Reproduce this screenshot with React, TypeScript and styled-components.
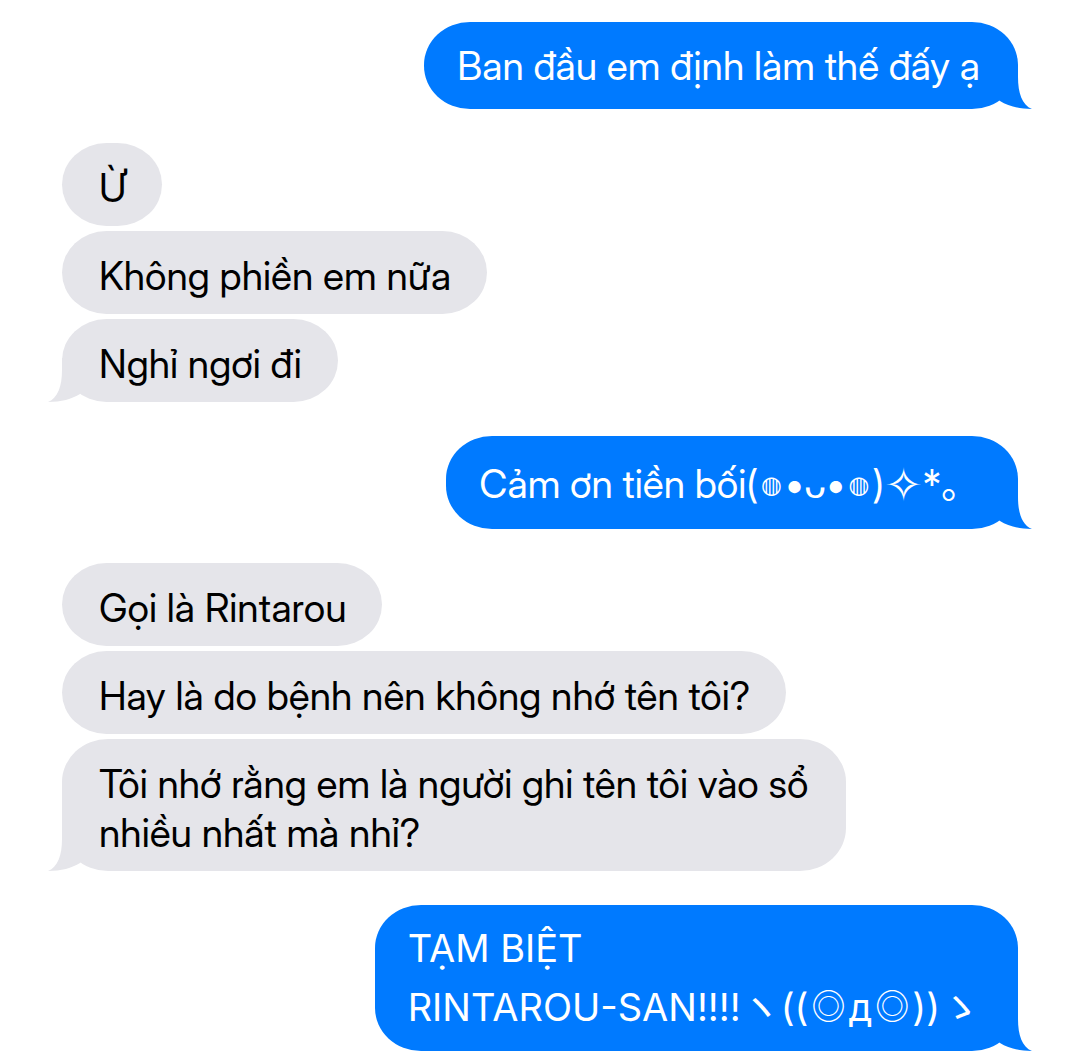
import React from "react";
import styled, { createGlobalStyle } from "styled-components";

const Global = createGlobalStyle`
  body { margin: 0; background: #fff; }
`;

const Thread = styled.main`
  box-sizing: border-box;
  display: flex;
  flex-direction: column;
  gap: 34px;
  padding: 22px 62px 6px;
  font-family: "Inter Display", Inter, "Liberation Sans", "Noto Sans CJK JP", "DejaVu Sans", sans-serif;
  font-size: 39px;
  line-height: 49px;
`;

const Group = styled.section<{ $sent: boolean }>`
  display: flex;
  flex-direction: column;
  align-items: ${p => (p.$sent ? "flex-end" : "flex-start")};
  gap: 5px;
`;

const Bubble = styled.div<{ $sent: boolean; $shout?: boolean }>`
  position: relative;
  box-sizing: border-box;
  max-width: 82%;
  padding: ${p => (p.$sent ? "19px 38px 19px 33px" : "20px 36px 14px 37px")};
  border-radius: 46px / 43px;
  color: ${p => (p.$sent ? "#fff" : "#000")};
  background: ${p => (p.$sent ? "#007aff" : "#e5e5ea")};
  ${p => p.$shout && `
    font-family: Inter, "Liberation Sans", "Noto Sans CJK JP", sans-serif;
    font-size: 38px;
  `}
`;

const Tail = styled.svg<{ $sent: boolean }>`
  position: absolute;
  bottom: 0;
  fill: ${p => (p.$sent ? "#007aff" : "#e5e5ea")};
  ${p => (p.$sent ? "right: -14px;" : "left: -14px; transform: scaleX(-1);")}
`;

type Script = "latin" | "symbols" | "kana";

const Line = styled.p<{ $script: Script }>`
  margin: 0;
  padding: ${p => ({ latin: "0", symbols: "4px 0 2px", kana: "10px 0 0" })[p.$script]};
`;

const Glyph = styled.span`
  line-height: 1;
`;

const Cheek = styled(Glyph)`
  margin: 0 3px;
  font-family: "DejaVu Sans", sans-serif;
  font-size: 24px;
  vertical-align: 5px;
`;

const Sparkle = styled(Glyph)`
  font-family: "DejaVu Sans", sans-serif;
  font-size: 46px;
  vertical-align: -3px;
`;

const Eye = styled(Glyph)`
  margin: 0 3px;
  font-family: "Noto Sans CJK JP", sans-serif;
  font-size: 34px;
  vertical-align: 2px;
`;

const Hand = styled(Glyph)`
  font-family: "Noto Sans CJK JP", sans-serif;
  font-size: 40px;
`;

const glyphs: Record<string, React.ElementType> = {
  "◍": Cheek,
  "✧": Sparkle,
  "◎": Eye,
  "ヽ": Hand,
  "ゝ": Hand,
};

const scriptOf = (text: string): Script =>
  /[ヽゝ]/.test(text) ? "kana" : /[◍✧]/.test(text) ? "symbols" : "latin";

const withGlyphs = (text: string) =>
  text.split(/([◍✧◎ヽゝ])/).map((part, i) => {
    const Shape = glyphs[part];
    return Shape ? <Shape key={i}>{part}</Shape> : part;
  });

type Message = { lines: string[]; shout?: boolean };
type Run = { sent: boolean; messages: Message[] };

const runs: Run[] = [
  { sent: true, messages: [{ lines: ["Ban đầu em định làm thế đấy ạ"] }] },
  {
    sent: false,
    messages: [{ lines: ["Ừ"] }, { lines: ["Không phiền em nữa"] }, { lines: ["Nghỉ ngơi đi"] }],
  },
  { sent: true, messages: [{ lines: ["Cảm ơn tiền bối(◍•ᴗ•◍)✧*。"] }] },
  {
    sent: false,
    messages: [
      { lines: ["Gọi là Rintarou"] },
      { lines: ["Hay là do bệnh nên không nhớ tên tôi?"] },
      { lines: ["Tôi nhớ rằng em là người ghi tên tôi vào sổ nhiều nhất mà nhỉ?"] },
    ],
  },
  { sent: true, messages: [{ lines: ["TẠM BIỆT", "RINTAROU-SAN!!!!ヽ((◎д◎))ゝ"], shout: true }] },
];

export default function App() {
  return (
    <>
      <Global />
      <Thread lang="vi">
        {runs.map((run, i) => (
          <Group key={i} $sent={run.sent}>
            {run.messages.map((message, j) => (
              <Bubble key={j} $sent={run.sent} $shout={message.shout}>
                {j === run.messages.length - 1 && (
                  <Tail $sent={run.sent} width="34" height="44" viewBox="0 0 34 44" aria-hidden="true">
                    <path d="M20 0V12C20 28 24 40 34 44C21 44 10 41 2 36L0 34V0Z" />
                  </Tail>
                )}
                {message.lines.map(line => (
                  <Line key={line} $script={scriptOf(line)}>{withGlyphs(line)}</Line>
                ))}
              </Bubble>
            ))}
          </Group>
        ))}
      </Thread>
    </>
  );
}
